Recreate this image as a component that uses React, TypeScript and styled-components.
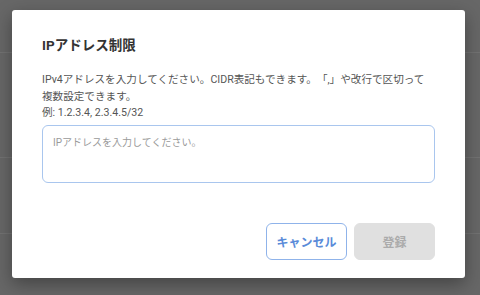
import React from "react";
import styled, { createGlobalStyle } from "styled-components";

const GlobalStyle = createGlobalStyle`
  html, body {
    margin: 0;
    padding: 0;
    width: 480px;
    height: 295px;
    overflow: hidden;
    font-family: Roboto, "Noto Sans CJK JP", sans-serif;
  }
`;

const Backdrop = styled.div`
  position: relative;
  width: 480px;
  height: 295px;
  background: #676767;
  padding: 10px 0 0 12px;
  box-sizing: border-box;
`;

const BgLine = styled.div<{ $top: number }>`
  position: absolute;
  left: 0;
  right: 0;
  top: ${(p) => p.$top}px;
  height: 1px;
  background: #727272;
`;

const Dialog = styled.div`
  position: relative;
  width: 453px;
  height: 268px;
  background: #fff;
  border-radius: 3px;
  box-shadow: 0 6px 18px rgba(0, 0, 0, 0.35);
  padding: 24px 30px 18px;
  box-sizing: border-box;
  display: flex;
  flex-direction: column;
`;

const Title = styled.h2`
  margin: 0;
  font-size: 13.5px;
  line-height: 22px;
  font-weight: 700;
  color: #333;
`;

const Description = styled.p`
  margin: 16px 0 0;
  padding-right: 4px;
  font-size: 10.6px;
  line-height: 16.5px;
  color: #555;
  text-spacing-trim: space-all;
`;

const TextArea = styled.textarea`
  margin-top: 3px;
  height: 58px;
  box-sizing: border-box;
  width: 100%;
  resize: none;
  border: 1px solid #a9c6ee;
  border-radius: 6px;
  padding: 9px 10px;
  font-family: inherit;
  font-size: 10px;
  line-height: 16px;
  color: #333;
  outline: none;
  &::placeholder {
    color: #9a9a9a;
  }
`;

const Footer = styled.div`
  margin-top: auto;
  display: flex;
  justify-content: flex-end;
  gap: 7px;
`;

const Button = styled.button<{ $variant: "outline" | "disabled" }>`
  width: 81px;
  height: 37px;
  border-radius: 6px;
  font-family: inherit;
  font-size: 12px;
  font-weight: 700;
  box-sizing: border-box;
  border: 1px solid
    ${(p) => (p.$variant === "outline" ? "#8fb3ea" : "#e0e0e0")};
  background: ${(p) => (p.$variant === "outline" ? "#fff" : "#e0e0e0")};
  color: ${(p) => (p.$variant === "outline" ? "#5a8bd9" : "#ababab")};
  cursor: ${(p) => (p.$variant === "outline" ? "pointer" : "default")};
`;

export default function App() {
  return (
    <>
      <GlobalStyle />
      <Backdrop>
        <BgLine $top={52} />
        <BgLine $top={157} />
        <BgLine $top={233} />
        <Dialog>
          <Title>IPアドレス制限</Title>
          <Description>
            IPv4アドレスを入力してください。CIDR表記もできます。「,」や改行で区切って複数設定できます。
            <br />
            例: 1.2.3.4, 2.3.4.5/32
          </Description>
          <TextArea placeholder="IPアドレスを入力してください。" />
          <Footer>
            <Button $variant="outline">キャンセル</Button>
            <Button $variant="disabled" disabled>
              登録
            </Button>
          </Footer>
        </Dialog>
      </Backdrop>
    </>
  );
}
